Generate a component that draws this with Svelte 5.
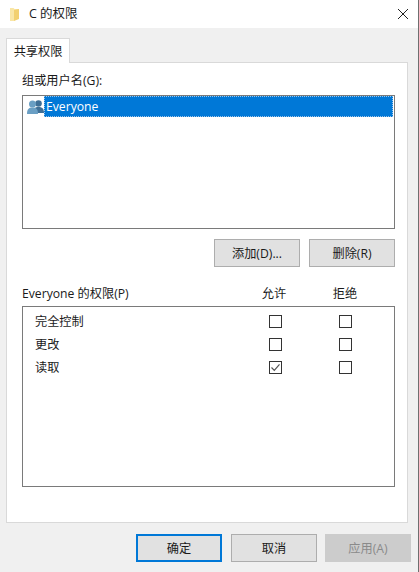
<script>
  const perms = [
    { name: '完全控制', allow: false, deny: false },
    { name: '更改', allow: false, deny: false },
    { name: '读取', allow: true, deny: false }
  ];
</script>

<div class="window">
  <header class="titlebar">
    <svg class="folder" width="9" height="14" viewBox="0 0 9 14">
      <path d="M0 1h3.500l1 1H9v10H5l-1 2H0z" fill="#f9e6a6" />
      <path d="M4 3l5-1v10l-5 2z" fill="#f2d070" />
    </svg>
    <span class="title">C 的权限</span>
    <svg class="close" width="12" height="12" viewBox="0 0 12 12">
      <path d="M1 1l10 10M11 1L1 11" stroke="#222" stroke-width="1" fill="none" />
    </svg>
  </header>

  <main class="body">
    <div class="tabs"><div class="tab">共享权限</div></div>
    <section class="panel">
      <div class="label">组或用户名(G):</div>
      <div class="listbox">
        <div class="row">
          <svg class="users" width="17" height="14" viewBox="0 0 17 14">
            <circle cx="11.500" cy="3.500" r="3.300" fill="#3f6f96" />
            <path d="M6 13c0-4.500 2-6 5.500-6S17 8.500 17 13z" fill="#3f6f96" />
            <circle cx="5.500" cy="4" r="3.500" fill="#6a9fc4" />
            <path d="M0 14c0-5 1.800-6.500 5.500-6.500S11 9 11 14z" fill="#6a9fc4" />
          </svg>
          <span class="selected">Everyone</span>
        </div>
      </div>
      <div class="actions">
        <button>添加(D)...</button>
        <button>删除(R)</button>
      </div>
      <div class="perm-head">
        <span class="perm-name">Everyone 的权限(P)</span>
        <span class="col head-allow">允许</span>
        <span class="col">拒绝</span>
      </div>
      <div class="perm-box">
        {#each perms as p}
          <div class="perm-row">
            <span class="perm-name row-name">{p.name}</span>
            <span class="col"><span class="check">
              {#if p.allow}
                <svg width="11" height="11" viewBox="0 0 11 11"><path d="M1.500 5.500l2.800 2.800 5.200-6" stroke="#555" stroke-width="1.200" fill="none" /></svg>
              {/if}
            </span></span>
            <span class="col"><span class="check"></span></span>
          </div>
        {/each}
      </div>
    </section>
    <footer class="footer">
      <button class="primary">确定</button>
      <button>取消</button>
      <button class="disabled">应用(A)</button>
    </footer>
  </main>
</div>

<style>
  :global(body) {
    margin: 0;
    background: #f0f0f0;
  }
  .window {
    width: 418px;
    height: 572px;
    border-right: 1px solid #6f6f6f;
    box-sizing: content-box;
    display: flex;
    flex-direction: column;
    font-family: "Open Sans", "Noto Sans CJK SC", sans-serif;
    font-size: 12.200px;
    color: #1a1a1a;
    overflow: hidden;
  }
  .titlebar {
    height: 28px;
    background: #fff;
    display: flex;
    align-items: center;
    padding: 0 9px 0 10px;
    flex: none;
  }
  .folder {
    margin-right: 10px;
    margin-top: -1px;
  }
  .title {
    flex: 1;
    font-size: 12.500px;
    line-height: 16px;
  }
  .body {
    flex: 1;
    background: #f0f0f0;
    padding: 10px 10px 0 6px;
    display: flex;
    flex-direction: column;
  }
  .tabs {
    display: flex;
    height: 24px;
    position: relative;
    z-index: 1;
  }
  .tab {
    width: 64px;
    height: 25px;
    background: #fff;
    border: 1px solid #d9d9d9;
    border-bottom: none;
    box-sizing: border-box;
    display: flex;
    align-items: center;
    justify-content: center;
  }
  .panel {
    height: 461px;
    box-sizing: border-box;
    background: #fff;
    border: 1px solid #d9d9d9;
    padding: 10px 12px 0 15px;
  }
  .label {
    height: 22px;
    line-height: 16px;
  }
  .listbox {
    height: 134px;
    box-sizing: border-box;
    border: 1px solid #7a7a7a;
    padding: 0 1px 0 2px;
  }
  .row {
    display: flex;
    align-items: center;
    height: 21px;
    padding-left: 2px;
  }
  .users {
    flex: none;
  }
  .selected {
    flex: 1;
    height: 21px;
    line-height: 21px;
    background: #0078d7;
    color: #fff;
    padding-left: 2px;
    outline: 1px dotted #9cc4e8;
    outline-offset: -1px;
  }
  .actions {
    display: flex;
    justify-content: flex-end;
    gap: 9px;
    margin-top: 10px;
  }
  button {
    width: 86px;
    height: 28px;
    box-sizing: border-box;
    background: #e1e1e1;
    border: 1px solid #adadad;
    font: inherit;
    color: #1a1a1a;
    padding: 0;
  }
  .perm-head {
    display: flex;
    align-items: center;
    height: 18px;
    margin-top: 17px;
    margin-bottom: 4px;
    padding: 0 15px 0 0;
  }
  .perm-name {
    flex: 1;
  }
  .head-allow {
    padding-right: 1px;
    width: 69px;
  }
  .row-name {
    padding-bottom: 1px;
  }
  .col {
    width: 70px;
    display: flex;
    justify-content: center;
  }
  .perm-box {
    height: 181px;
    box-sizing: border-box;
    border: 1px solid #7a7a7a;
    padding: 3px 14px 0 12px;
  }
  .perm-row {
    display: flex;
    align-items: center;
    height: 23px;
  }
  .check {
    width: 13px;
    height: 13px;
    box-sizing: border-box;
    border: 1px solid #333;
    background: #fff;
    display: flex;
    align-items: center;
    justify-content: center;
  }
  .footer {
    display: flex;
    justify-content: flex-end;
    gap: 9px;
    margin-top: 11px;
    margin-right: -3px;
  }
  .primary {
    background: #e1e1e1;
    border: 2px solid #0078d7;
  }
  .disabled {
    background: #cccccc;
    border-color: #cccccc;
    color: #8a8a8a;
    margin-left: -1px;
  }
</style>
